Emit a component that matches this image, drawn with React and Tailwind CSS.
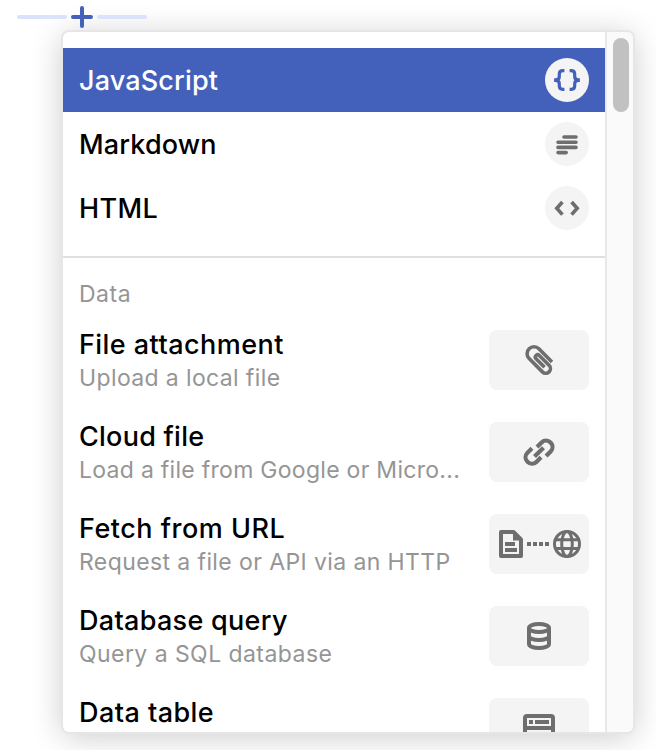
const Braces = () => (
  <svg className="size-11" viewBox="0 0 44 44" fill="none" stroke="#4361bb" strokeWidth="3.2">
    <path d="M19.400 12.700h-1.600c-2.400 0-3.500 1.300-3.500 3.400v2.400c0 2-1 3.300-3.600 3.300v.6c2.600 0 3.600 1.300 3.600 3.300v2.400c0 2.100 1.100 3.300 3.500 3.300h1.600" />
    <path d="M24.600 12.700h1.600c2.400 0 3.500 1.300 3.500 3.400v2.400c0 2 1 3.300 3.600 3.300v.6c-2.600 0-3.600 1.300-3.600 3.300v2.400c0 2.100-1.100 3.300-3.500 3.300h-1.600" />
  </svg>
);

const Lines = () => (
  <svg className="size-11" viewBox="0 0 44 44" fill="none" stroke="#6e6e6e" strokeWidth="3.6" strokeLinecap="round">
    <path d="M19 15h12M13 20.200h18M13 25.400h18M13 30.600h8.200" />
  </svg>
);

const Chevrons = () => (
  <svg className="size-11" viewBox="0 0 44 44" fill="none" stroke="#6e6e6e" strokeWidth="3.600">
    <path d="M17.400 16 11.800 22.300l5.600 6.300M26.600 16l5.600 6.300-5.600 6.300" />
  </svg>
);

const Clip = () => (
  <svg className="h-15 w-25" viewBox="0 0 100 60" fill="none" stroke="#6e6e6e" strokeWidth="3.600">
    <path
      transform="translate(45 23.700) rotate(45)"
      d="M18.500-6.900H0A6.900 6.900 0 0 0 0 6.900H18.800A4.700 4.700 0 0 0 18.800-2.500H5A2.300 2.300 0 0 0 5 2.100H17"
    />
  </svg>
);

const Chain = () => (
  <svg className="h-15 w-25" viewBox="0 0 100 60" fill="none" stroke="#6e6e6e" strokeWidth="4.200">
    <path d="M48 25l4.600-4.600a6.400 6.400 0 0 1 9.050 9.050l-4.600 4.600M52 35.300l-4.600 4.600a6.400 6.400 0 0 1-9.050-9.050l4.600-4.600M45.500 34.500l9-8.800" />
  </svg>
);

const Fetch = () => (
  <svg className="h-15 w-25" viewBox="0 0 100 60" fill="none" stroke="#6e6e6e">
    <path strokeWidth="4" strokeLinejoin="round" d="M12 18h12.500l7.500 7.500V42H12z" />
    <path fill="#6e6e6e" stroke="none" d="M24 17v9.500H33z" />
    <path strokeWidth="4" d="M16 30h10M16 36h12" />
    <path strokeWidth="4" strokeDasharray="4 2" d="M38 30h22" />
    <g strokeWidth="3">
      <circle cx="78" cy="30" r="12.500" />
      <ellipse cx="78" cy="30" rx="5.300" ry="12.500" />
      <path d="M66 25.700h24M66 34.600h24" />
    </g>
  </svg>
);

const Database = () => (
  <svg className="h-15 w-25" viewBox="0 0 100 60" fill="none" stroke="#6e6e6e" strokeWidth="4">
    <ellipse cx="50" cy="22" rx="10" ry="4" />
    <path d="M40 22v16c0 2.200 4.500 4 10 4s10-1.800 10-4V22M40 30c0 2.200 4.500 4 10 4s10-1.800 10-4" />
  </svg>
);

const Table = () => (
  <svg className="h-15 w-25" viewBox="0 0 100 60" fill="none" stroke="#6e6e6e" strokeWidth="4">
    <rect x="36" y="18" width="28" height="28" rx="2" />
    <path d="M36 30h28M40 24h4M46 24h14" />
  </svg>
);

const cells = [
  { name: "JavaScript", icon: Braces, row: "bg-[#4361bb] text-white", text: "tracking-[0.15px]" },
  { name: "Markdown", icon: Lines, row: "", text: "tracking-[0.15px]" },
  { name: "HTML", icon: Chevrons, row: "", text: "tracking-[0.4px]" },
];

const sources = [
  { name: "File attachment", note: "Upload a local file", icon: Clip, title: "tracking-[0.45px]", sub: "tracking-[0.37px]" },
  { name: "Cloud file", note: "Load a file from Google or Micro...", icon: Chain, title: "tracking-[0.25px]", sub: "tracking-[0.28px]" },
  { name: "Fetch from URL", note: "Request a file or API via an HTTP", icon: Fetch, title: "tracking-[0.5px]", sub: "tracking-[0.4px]" },
  { name: "Database query", note: "Query a SQL database", icon: Database, title: "tracking-[0.3px]", sub: "tracking-[0.44px]" },
  { name: "Data table", note: "", icon: Table, title: "tracking-[0.45px]", sub: "" },
];

export default function App() {
  return (
    <div className="h-[750px] w-[656px] overflow-hidden bg-white font-['Inter',sans-serif] text-black">
      <div className="flex h-8 items-start pt-[6px] pl-[17px]">
        <div className="mt-[9px] h-1 w-[50px] rounded-full bg-[#dbe2fb]" />
        <svg className="mx-1 h-[22px] w-[22px]" viewBox="0 0 22 22" stroke="#4361bb" strokeWidth="4" strokeLinecap="round">
          <path d="M11 2v18M2 11h18" />
        </svg>
        <div className="mt-[9px] h-1 w-[50px] rounded-full bg-[#dbe2fb]" />
      </div>
      <div className="ml-[63px] flex h-[700px] w-[570px] overflow-hidden rounded-md bg-white shadow-[0_0_0_2px_#e6e6e6,0_4px_32px_rgba(0,0,0,0.22)]">
        <div className="w-[542px] shrink-0">
          <div className="border-b-2 border-[#e0e0e0] pt-4 pb-4">
            {cells.map(({ name, icon: Icon, row, text }) => (
              <div key={name} className={`flex h-16 items-center justify-between px-4 ${row}`}>
                <span className={`pt-0.5 text-[27px] font-medium ${text}`}>{name}</span>
                <span className="size-11 rounded-full bg-[#f4f4f4]"><Icon /></span>
              </div>
            ))}
          </div>
          <div className="flex h-14 items-end px-4 pb-1 text-[23px] leading-8 tracking-[0.5px] text-[#959595]">Data</div>
          {sources.map(({ name, note, icon: Icon, title, sub }) => (
            <div key={name} className="flex h-[92px] items-center justify-between px-4">
              <div className="flex h-[60px] flex-col whitespace-nowrap">
                <span className={`h-[34px] shrink-0 text-[27px] leading-[30px] font-medium ${title}`}>{name}</span>
                <span className={`shrink-0 text-[23px] leading-[28px] text-[#959595] ${sub}`}>{note}</span>
              </div>
              <span className="h-15 w-25 shrink-0 rounded-lg bg-[#f4f4f4]"><Icon /></span>
            </div>
          ))}
        </div>
        <div className="flex w-7 shrink-0 justify-end border-l-2 border-[#e8e8e8] bg-[#fafafa] pt-[6px] pr-1">
          <div className="h-[74px] w-4 rounded-full bg-[#c1c1c1]" />
        </div>
      </div>
    </div>
  );
}
